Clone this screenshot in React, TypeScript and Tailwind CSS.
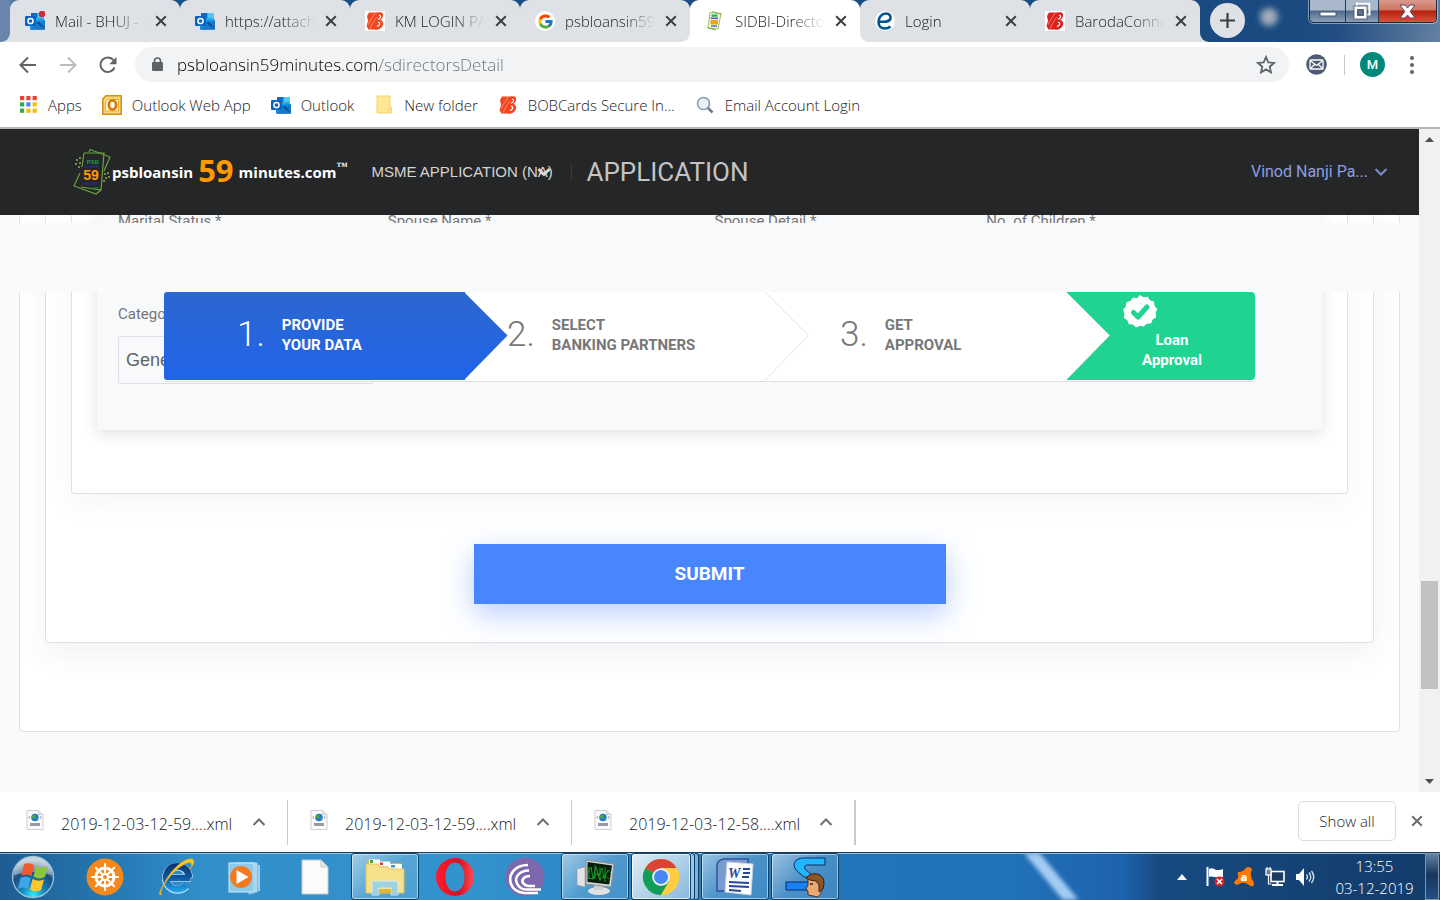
import type { ReactNode } from "react";
import { FcGoogle } from "react-icons/fc";

const UI = "font-['Open_Sans','Noto_Sans',sans-serif]";

/* ---------- icons ---------- */

function OutlookIcon({ badge = false }: { badge?: boolean }) {
  return (
    <svg width="20" height="20" viewBox="0 0 20 20" aria-hidden="true">
      <rect x="6" y="2" width="13" height="9" fill="#28a8ea" />
      <rect x="6" y="2" width="6.5" height="5" fill="#0f6cbd" />
      <rect x="12.500" y="2" width="6.500" height="5" fill="#50c8f5" />
      <path d="M5 9l15 0v8.500a1 1 0 0 1-1 1H6a1 1 0 0 1-1-1z" fill="#1490df" />
      <path d="M5 18.300L20 9.500v8.500a.8.8 0 0 1-.8.8H6z" fill="#1a76c6" />
      <path d="M20 18l-9-6 3-1.500z" fill="#0a4f96" />
      <rect x="0" y="5" width="11" height="10" rx="1" fill="#0a63c0" />
      <circle cx="5.500" cy="10" r="2.600" fill="none" stroke="#fff" strokeWidth="1.500" />
      {badge && <circle cx="17" cy="3" r="3.200" fill="#d8282f" />}
    </svg>
  );
}

function BarodaIcon({ color = "#f4451f" }: { color?: string }) {
  return (
    <svg width="20" height="20" viewBox="0 0 20 20" aria-hidden="true">
      <rect width="20" height="20" fill="#fff" />
      <path d="M4 1.500h10l-2 8 1 9H3.500L1.500 15l1.500-5-1-5z" fill={color} />
      <path d="M12 2c5-2 7.500 1 5.500 4.500-.5 1-1.500 2-2.500 2.500 4 .5 4 5 1.500 7.500-2 2-4.500 2.200-6.500 2z" fill={color} />
      <path d="M14 4.500c1.500-.4 2 .6 1.300 2-.6 1-1.300 1.500-2.300 1.800M13 11.500c1.700-.2 2.200 1 1.300 2.400-.6.9-1.500 1.300-2.300 1.400" fill="none" stroke="#fff" strokeWidth="1.200" />
      <path d="M10 2C8 6 5 9 3 14M12 6C9 10 7 13 5 17.500" stroke="#fff" strokeWidth=".4" fill="none" />
    </svg>
  );
}

function PsbTabIcon() {
  return (
    <svg width="20" height="20" viewBox="0 0 20 20" aria-hidden="true">
      <path d="M5 1.500l11 1-3 15.500-10-1z" fill="#f4fbe9" stroke="#8bb45b" strokeWidth=".9" />
      <path d="M7 .7l9.500 2.500M2.500 16.500l8 2.700" stroke="#6fae3a" strokeWidth="1" />
      <rect x="6.500" y="3.500" width="6" height="2.200" fill="#22b24c" />
      <rect x="5.500" y="6.500" width="7.500" height="1.600" fill="#4b62b5" />
      <rect x="5.500" y="9" width="7.500" height="4.500" fill="#f6a21e" />
      <rect x="6" y="14.300" width="6" height="1.400" fill="#4b62b5" />
    </svg>
  );
}

function EIcon() {
  return (
    <svg width="20" height="20" viewBox="0 0 20 20" aria-hidden="true">
      <circle cx="10" cy="10" r="10" fill="#fff" />
      <path d="M4.500 10.500c4 .5 10 .3 11-3 .6-2.500-1-5-4.500-5-4.500 0-7.500 4-7.500 8.500 0 4 2.500 6.500 6.200 6.500 2.300 0 4.300-.7 5.800-2" fill="none" stroke="#00548f" strokeWidth="2.600" />
    </svg>
  );
}

function CloseX({ size = 12, width = 2, color = "#3c4043" }: { size?: number; width?: number; color?: string }) {
  return (
    <svg width={size} height={size} viewBox="0 0 12 12" aria-hidden="true">
      <path d="M1.200 1.200l9.600 9.600M10.800 1.200L1.200 10.800" stroke={color} strokeWidth={width} />
    </svg>
  );
}

function Chevron({ up = false, color, width = 2 }: { up?: boolean; color: string; width?: number }) {
  return (
    <svg width="14" height="10" viewBox="0 0 14 10" aria-hidden="true">
      <path d={up ? "M1.500 8L7 2.500 12.500 8" : "M1.500 2L7 7.500 12.500 2"} fill="none" stroke={color} strokeWidth={width} />
    </svg>
  );
}

/* ---------- browser chrome ---------- */

type TabProps = { icon: ReactNode; title: string; active?: boolean; shape?: string; line?: boolean };

function Tab({ icon, title, active, shape = "", line }: TabProps) {
  return (
    <div className={`h-full w-[170px] shrink ${shape ? "bg-[linear-gradient(transparent_50%,#fff_50%)]" : ""}`}>
      <div
        className={`relative flex h-full items-center rounded-t-[9px] pl-[15px] pr-[11px] ${shape} ${active ? "bg-white" : "bg-[#dee1e6]"}`}
      >
        <span className="shrink-0">{icon}</span>
        <a
          href="#tab"
          className="ml-[10px] min-w-0 flex-1 overflow-hidden whitespace-nowrap text-[15px] font-light leading-5 text-[#202124] [mask-image:linear-gradient(to_right,#000_65%,transparent_100%)]"
        >
          {title}
        </a>
        <button aria-label={`Close ${title}`} className="ml-2 flex h-4 w-4 items-center justify-center">
          <CloseX />
        </button>
        {line && <span className="absolute -right-px bottom-2 top-[9px] w-px bg-[#85888d]" />}
      </div>
    </div>
  );
}

function WindowControls() {
  return (
    <div className="mr-[3px] flex h-[23px] w-[128px] shrink-0 self-start overflow-hidden rounded-b-[5px] border border-t-0 border-[#1a2a44] shadow-[0_0_0_1px_rgba(255,255,255,0.45)]">
      <button aria-label="Minimize" className="flex flex-[36] items-end justify-center border-r border-[#26374f] bg-[linear-gradient(#a9b8ca_45%,#4e6a8c_50%,#8ba0b8)] pb-[5px]">
        <svg width="18" height="6" viewBox="0 0 18 6" aria-hidden="true">
          <rect x="1" y="1" width="16" height="4" fill="#fff" stroke="#46546a" />
        </svg>
      </button>
      <button aria-label="Restore" className="flex flex-[33] items-center justify-center border-r border-[#26374f] bg-[linear-gradient(#a9b8ca_45%,#4e6a8c_50%,#8ba0b8)]">
        <svg width="18" height="18" viewBox="0 0 18 18" aria-hidden="true">
          <path d="M5 1h12v12h-3M5 1v4" fill="none" stroke="#46546a" strokeWidth="1" />
          <path d="M4 5V1.500h12.500v11H13" fill="none" stroke="#fff" strokeWidth="2" />
          <rect x="2.500" y="5.500" width="10" height="10" fill="#5b7492" stroke="#fff" strokeWidth="3" />
          <rect x="1" y="4" width="13" height="13" fill="none" stroke="#46546a" strokeWidth=".8" />
          <rect x="5" y="8" width="5" height="5" fill="none" stroke="#46546a" strokeWidth="1" />
        </svg>
      </button>
      <button aria-label="Close window" className="flex flex-[58] items-center justify-center bg-[linear-gradient(#d99a8c_0%,#cf7462_45%,#b5200f_50%,#d2553a)]">
        <svg width="17" height="15" viewBox="0 0 17 15" aria-hidden="true">
          <path d="M1 1h5l2.500 3L11 1h5l-4.800 6.500L16 14h-5l-2.500-3L6 14H1l4.800-6.500z" fill="#fff" stroke="#4c4c5c" strokeWidth="1" />
        </svg>
      </button>
    </div>
  );
}

function TabStrip() {
  return (
    <div className="flex h-[42px] shrink-0 bg-[linear-gradient(100deg,#6f88b0_0%,#1c4f88_3%,#1a4a80_90%,#234f82_93%,#6481a2_100%)]">
      <div className="w-[10px] shrink-0 bg-[#dee1e6]">
        <div className="h-full rounded-br-[9px] bg-[#6a85ad]" />
      </div>
      <div className="flex min-w-0">
        <Tab icon={<OutlookIcon badge />} title="Mail - BHUJ - Outlook" line />
        <Tab icon={<OutlookIcon />} title="https://attachment" line />
        <Tab icon={<BarodaIcon />} title="KM LOGIN PAGE" line />
        <Tab
          icon={
            <span className="flex h-5 w-5 items-center justify-center rounded-full bg-white">
              <FcGoogle size={17} />
            </span>
          }
          title="psbloansin59minutes"
          shape="rounded-br-[9px]"
        />
        <Tab icon={<PsbTabIcon />} title="SIDBI-Directors" active />
        <Tab icon={<EIcon />} title="Login" shape="rounded-bl-[9px]" line />
        <Tab icon={<BarodaIcon color="#e0201a" />} title="BarodaConnect" />
      </div>
      <div className="w-[10px] shrink-0 bg-[#dee1e6]">
        <div className="h-full rounded-bl-[9px] bg-[#1b4a80]" />
      </div>
      <button aria-label="New tab" className="mt-[3px] flex h-[35px] w-[35px] shrink-0 items-center justify-center rounded-full bg-[#dee1e6]">
        <svg width="15" height="15" viewBox="0 0 15 15" aria-hidden="true">
          <path d="M7.500 0v15M0 7.500h15" stroke="#3c4043" strokeWidth="2.200" />
        </svg>
      </button>
      <span className="ml-[15px] mt-2 h-[18px] w-[18px] rounded-full bg-[#a3adba] blur-[3px]" />
      <div className="flex-1" />
      <WindowControls />
    </div>
  );
}

function Toolbar() {
  return (
    <div className="flex h-[45px] shrink-0 items-center bg-white pl-[19px] pr-[26px]">
      <button aria-label="Back">
        <svg width="18" height="18" viewBox="0 0 18 18" aria-hidden="true">
          <path d="M17 9H2M9 1.500L1.500 9 9 16.500" fill="none" stroke="#5f6368" strokeWidth="2" />
        </svg>
      </button>
      <button aria-label="Forward" className="ml-[22px]">
        <svg width="18" height="18" viewBox="0 0 18 18" aria-hidden="true">
          <path d="M1 9h15M9 1.500L16.500 9 9 16.500" fill="none" stroke="#babcbe" strokeWidth="2" />
        </svg>
      </button>
      <button aria-label="Reload" className="ml-[22px]">
        <svg width="18" height="18" viewBox="0 0 18 18" aria-hidden="true">
          <path d="M15.500 11.500A7.300 7.300 0 1 1 14.500 4.200" fill="none" stroke="#5f6368" strokeWidth="2" />
          <path d="M17.500 1v7.200h-7.200z" fill="#5f6368" />
        </svg>
      </button>
      <div className="ml-[18px] flex h-[35px] flex-1 items-center rounded-full bg-[#f1f3f4] pl-[17px] pr-[13px]">
        <svg width="11" height="15" viewBox="0 0 11 15" aria-hidden="true">
          <rect x="0" y="5" width="11" height="9" rx="1" fill="#5f6368" />
          <path d="M2.500 6V4a3 3 0 0 1 6 0v2" fill="none" stroke="#5f6368" strokeWidth="1.600" />
        </svg>
        <input
          aria-label="Address"
          readOnly
          value="psbloansin59minutes.com/sdirectorsDetail"
          className="ml-[14px] h-7 min-w-0 flex-1 bg-[linear-gradient(to_right,#000_202px,#6b7075_202px)] bg-clip-text text-[17px] font-light text-transparent outline-none"
        />
        <button aria-label="Bookmark this page">
          <svg width="20" height="19" viewBox="0 0 20 19" aria-hidden="true">
            <path d="M10 2l2.300 5.400 5.800.5-4.400 3.800 1.300 5.700-5-3-5 3 1.300-5.700L1.900 7.900l5.800-.5z" fill="none" stroke="#5f6368" strokeWidth="1.800" />
          </svg>
        </button>
      </div>
      <button aria-label="Mail extension" className="ml-[17px]">
        <svg width="21" height="21" viewBox="0 0 21 21" aria-hidden="true">
          <circle cx="10.500" cy="10.500" r="10.300" fill="#4d5b75" />
          <rect x="4" y="6" width="13" height="9" rx="1" fill="none" stroke="#fff" strokeWidth="1.300" />
          <path d="M4 6.500l6.500 5 6.500-5M4 15l4.500-4.500M17 15l-4.500-4.500" fill="none" stroke="#fff" strokeWidth="1.200" />
        </svg>
      </button>
      <span className="ml-[17px] h-5 w-px bg-[#c6c8cb]" />
      <button aria-label="Profile" className="ml-[15px] flex h-[25px] w-[25px] items-center justify-center rounded-full bg-[#00897b] font-[Roboto,sans-serif] text-[13px] font-medium text-white">
        M
      </button>
      <button aria-label="Menu" className="ml-[25px] flex h-5 flex-col items-center justify-center gap-[3px]">
        <span className="h-1 w-1 rounded-full bg-[#5f6368]" />
        <span className="h-1 w-1 rounded-full bg-[#5f6368]" />
        <span className="h-1 w-1 rounded-full bg-[#5f6368]" />
      </button>
    </div>
  );
}

function Bookmark({ icon, children }: { icon: ReactNode; children: ReactNode }) {
  return (
    <a href="#bookmark" className="flex items-center gap-[10px] whitespace-nowrap text-[15px] font-light leading-5 text-[#202124]">
      <span className="flex h-5 w-5 items-center justify-center">{icon}</span>
      {children}
    </a>
  );
}

const appDots = ["#ea4335", "#ea4335", "#ea4335", "#34a853", "#4285f4", "#fbbc04", "#34a853", "#fbbc04", "#fbbc04"];

function BookmarksBar() {
  return (
    <nav className="flex h-[42px] shrink-0 items-center gap-5 border-b-2 border-[#b4b5b7] bg-white pb-[5px] pl-[18px]">
      <Bookmark
        icon={
          <svg width="17" height="17" viewBox="0 0 17 17" aria-hidden="true">
            {appDots.map((c, i) => (
              <rect key={i} x={(i % 3) * 6.3} y={Math.floor(i / 3) * 6.3} width="4.200" height="4.200" fill={c} />
            ))}
          </svg>
        }
      >
        Apps
      </Bookmark>
      <Bookmark
        icon={
          <svg width="20" height="20" viewBox="0 0 20 20" aria-hidden="true">
            <path d="M4 .8h15.200v18.400H.8V4z" fill="#f7d679" stroke="#d98d12" strokeWidth="1.500" />
            <path d="M5.500 4.500h11v11.500H3.500V6.500z" fill="#fff2cc" stroke="#edb23a" />
            <ellipse cx="10.500" cy="10" rx="3.600" ry="4.600" fill="#fff" stroke="#d97b06" strokeWidth="2.800" />
          </svg>
        }
      >
        Outlook Web App
      </Bookmark>
      <Bookmark icon={<OutlookIcon />}>Outlook</Bookmark>
      <Bookmark
        icon={
          <svg width="16" height="19" viewBox="0 0 16 19" aria-hidden="true">
            <path d="M1 1h13v11l1.500 1v5H1z" fill="#ffe795" stroke="#f4d467" />
            <path d="M12 18v-4l3.500-1" fill="none" stroke="#f4d467" />
          </svg>
        }
      >
        New folder
      </Bookmark>
      <Bookmark icon={<BarodaIcon />}>BOBCards Secure In...</Bookmark>
      <Bookmark
        icon={
          <svg width="18" height="18" viewBox="0 0 18 18" aria-hidden="true">
            <path d="M11.500 11.500l5 5" stroke="#6e7f90" strokeWidth="2.600" />
            <circle cx="7.500" cy="7.500" r="6" fill="#e6f3fc" stroke="#8b9bab" strokeWidth="1.600" />
          </svg>
        }
      >
        Email Account Login
      </Bookmark>
    </nav>
  );
}

/* ---------- web page ---------- */

function NotesLogo() {
  return (
    <svg width="38" height="46" viewBox="0 0 38 46" aria-hidden="true">
      <g fill="none" stroke="#6aa03d" strokeWidth="1.200">
        <path d="M11 4h20l-3 37-20-3M11 4L9 18" />
        <path d="M16 3l1-2.500L37 8 31 22" />
        <path d="M28 41l-5 4L1 37l6-13" />
      </g>
      <g fill="#8cb14e">
        <circle cx="4" cy="11" r="1" /><circle cx="7" cy="9" r="1" /><circle cx="3" cy="15" r="1" />
        <circle cx="7" cy="14" r="1" /><circle cx="6" cy="18" r="1" /><circle cx="32" cy="25" r="1" />
        <circle cx="35" cy="24" r="1" /><circle cx="33" cy="29" r="1" /><circle cx="36" cy="28" r="1" />
        <circle cx="31" cy="32" r="1" />
      </g>
      <g fontFamily="'Liberation Sans', sans-serif" fontWeight="700" textAnchor="middle">
        <text x="20" y="15" fontSize="6" fill="#12a04a">PSB</text>
        <text x="18" y="19" fontSize="4" fill="#2d2f88">LOANS</text>
        <text x="18" y="31" fontSize="14" fill="#ff9900">59</text>
        <text x="18" y="36" fontSize="3" fill="#2d2f88">MINUTES</text>
        <text x="22" y="40" fontSize="4" fill="#12803c">.com</text>
      </g>
    </svg>
  );
}

function SiteHeader() {
  return (
    <header className="relative z-10 flex h-[86px] shrink-0 items-center bg-[#252628] pl-[73px] pr-[31px]">
      <a href="#home" className={`flex items-center whitespace-nowrap font-bold text-white ${UI}`}>
        <NotesLogo />
        <span className="ml-px text-[15px]">psbloansin</span>
        <span className="mb-1 ml-[5px] text-[31px] font-bold leading-8 text-[#ff9900]">59</span>
        <span className="ml-[5px] text-[15px]">minutes.com</span>
        <span className="mb-3 font-['Liberation_Serif',serif] text-[11px] leading-3">™</span>
      </a>
      <div className="relative ml-6 flex items-center">
        <select
          aria-label="Application type"
          className="w-[184px] appearance-none bg-transparent font-['Liberation_Sans',sans-serif] text-[15px] leading-5 text-[#d4d4d4] outline-none"
        >
          <option>MSME APPLICATION (NA)</option>
        </select>
        <span className="pointer-events-none absolute right-1">
          <Chevron color="#d8d8d8" width={3} />
        </span>
      </div>
      <span className="ml-4 h-4 w-px bg-[#3a3b3e]" />
      <h1 className="ml-[14px] text-[26px] leading-8 text-[#c4c4c4]">APPLICATION</h1>
      <button className="ml-auto flex items-center gap-[6px] text-[16px] leading-5 text-[#8e9ee0]">
        Vinod Nanji Pa...
        <Chevron color="#7d8cc4" />
      </button>
    </header>
  );
}

function StepTip({ fill, stroke }: { fill: string; stroke: string }) {
  return (
    <svg className="absolute -right-[43px] top-0 z-10" width="44" height="88" viewBox="0 0 44 88" aria-hidden="true">
      <defs>
        <linearGradient id="tipBlue" x1="0" y1="0" x2="0" y2="1">
          <stop offset="0" stopColor="#2c66cf" />
          <stop offset="1" stopColor="#2064e9" />
        </linearGradient>
      </defs>
      <path d="M0 0L43.500 43.500 0 88z" fill={fill} />
      <path d="M0 0L43.500 43.500 0 88" fill="none" stroke={stroke} />
    </svg>
  );
}

function Step({ n, lines, pad, blue }: { n: string; lines: [string, string]; pad: string; blue?: boolean }) {
  return (
    <li
      className={`relative flex h-[88px] min-w-0 items-center gap-[17px] pb-[2px] ${pad} ${
        blue ? "rounded-l-[3px] bg-[linear-gradient(#2c66cf,#2064e9)] text-white" : "bg-white text-[#777777]"
      }`}
    >
      <span className="relative z-20 text-[35px] font-light leading-10">{n}</span>
      <span className="whitespace-nowrap text-[15px] font-bold leading-5">
        {lines[0]}
        <br />
        {lines[1]}
      </span>
      <StepTip fill={blue ? "url(#tipBlue)" : "#fff"} stroke={blue ? "none" : "#e2e2e2"} />
    </li>
  );
}

function Stepper() {
  return (
    <ol className="absolute left-[164px] right-[164px] top-[77px] grid grid-cols-[301fr_301fr_301fr_188fr] rounded-[3px] border-b border-[#dedfe3] bg-white pb-px">
      <Step n="1." lines={["PROVIDE", "YOUR DATA"]} pad="pl-[73px]" blue />
      <Step n="2." lines={["SELECT", "BANKING PARTNERS"]} pad="pl-[42px]" />
      <Step n="3." lines={["GET", "APPROVAL"]} pad="pl-[74px]" />
      <li className="flex h-[88px] min-w-0 flex-col items-center rounded-r-[4px] bg-[#21d391] pl-[22px] pt-[2px] text-center text-[15px] font-bold leading-5 text-white">
        <svg className="mr-[64px]" width="36" height="36" viewBox="0 0 36 36" aria-hidden="true">
          <path
            d="M18 1l3.500 2.300 4.200-.5 2.300 3.500 4 1.300.5 4.200 2.700 3.200-1.500 4 .5 4.200-3.500 2.300-1.700 3.900-4.200.3-3.200 2.700L18 31.800l-4 1.600-3-2.900-4.200-.3-1.500-4-3.600-2.400.8-4.100-1.500-4 2.700-3.200.7-4.200 4-1.200 2.400-3.500 4.200.6z"
            fill="#fff"
          />
          <path d="M11.500 18.500l4.500 4.500L25 13" fill="none" stroke="#21d391" strokeWidth="5" strokeLinecap="round" strokeLinejoin="round" />
        </svg>
        <span>
          Loan
          <br />
          Approval
        </span>
      </li>
    </ol>
  );
}

function PageBody() {
  return (
    <main className="relative min-h-0 flex-1 overflow-hidden bg-[#fafafa]">
      <form onSubmit={(e) => e.preventDefault()} className="mx-[19px] rounded-b-[4px] border border-t-0 border-[#e2e2e4] bg-white px-[25px] pb-[88px]">
        <div className="rounded-b-[4px] border border-t-0 border-[#e0e0e3] bg-white px-[25px] pb-[38px] shadow-[0_10px_30px_rgba(60,70,110,0.07)]">
          <div className="rounded-b-[4px] border border-t-0 border-[#e0e0e3] bg-white px-[25px] pb-[63px] shadow-[0_10px_30px_rgba(60,70,110,0.05)]">
            <div className="rounded-b-[4px] bg-[#f8f9fb] px-[21px] pb-[46px] shadow-[0_4px_16px_rgba(0,0,0,0.12)]">
              <div className="grid grid-cols-[270fr_327fr_272fr_315fr] text-[15px] leading-5 text-[#757575]">
                <span className="-mt-1">Marital Status *</span>
                <span className="-mt-1">Spouse Name *</span>
                <span className="-mt-1">Spouse Detail *</span>
                <span className="-mt-1">No. of Children *</span>
              </div>
              <label htmlFor="category" className="mt-[73px] block text-[15px] leading-5 text-[#757575]">
                Category *
              </label>
              <select
                id="category"
                className="mt-3 block h-12 w-64 appearance-none rounded-[3px] border border-[#dfe0e4] bg-[#f8f9fb] px-[7px] font-['Liberation_Sans',sans-serif] text-[18px] text-[#606468]"
              >
                <option>General</option>
              </select>
            </div>
          </div>
          <button
            type="submit"
            className="mx-auto mt-[50px] block h-[60px] w-[472px] bg-[#4886ff] text-[19px] font-bold leading-6 text-white shadow-[0_10px_30px_rgba(72,134,255,0.4)]"
          >
            SUBMIT
          </button>
        </div>
      </form>
      <div className="absolute inset-x-0 top-2 h-[69px] bg-[#fafafa]" />
      <Stepper />
    </main>
  );
}

function Scrollbar() {
  return (
    <div className="flex w-[21px] shrink-0 flex-col items-center bg-[#f1f1f1]">
      <button aria-label="Scroll up" className="flex h-[21px] w-full shrink-0 items-center justify-center">
        <svg width="9" height="5" viewBox="0 0 9 5" aria-hidden="true"><path d="M4.500 0L9 5H0z" fill="#505050" /></svg>
      </button>
      <div className="flex-[431]" />
      <div className="h-[108px] w-[17px] shrink-0 bg-[#c1c1c1]" />
      <div className="flex-[82]" />
      <button aria-label="Scroll down" className="flex h-[21px] w-full shrink-0 items-center justify-center">
        <svg width="9" height="5" viewBox="0 0 9 5" aria-hidden="true"><path d="M4.500 5L9 0H0z" fill="#505050" /></svg>
      </button>
    </div>
  );
}

/* ---------- downloads ---------- */

function Download({ name, last }: { name: string; last?: boolean }) {
  return (
    <div className={`flex h-[45px] w-[284px] items-center pl-[22px] pr-[21px] ${last ? "border-r-2" : "border-r"} border-[#c9cbce]`}>
      <svg className="mb-1 shrink-0" width="18" height="20" viewBox="0 0 18 20" aria-hidden="true">
        <path d="M1 .5h11.500L17 4.500v15H1z" fill="#fafafa" stroke="#cfcfd2" />
        <path d="M12.500.5v4H17" fill="#e6e6e8" stroke="#cfcfd2" />
        <circle cx="9" cy="7.500" r="3.800" fill="#2476c8" />
        <path d="M7 5c2-1 3 .5 2.500 2S7.500 9 6.500 8 6 6 7 5M11 7l1.500.5-1 2.500-1-1z" fill="#3fae49" />
        <path d="M4 6L2.500 7.500 4 9M14 6l1.500 1.500L14 9" fill="none" stroke="#888" strokeWidth=".8" />
        <rect x="4" y="13" width="10" height="3" fill="#9d97ab" />
      </svg>
      <a href="#download" className="ml-[17px] mt-1 flex-1 whitespace-nowrap text-[16px] font-light leading-5 text-[#202124]">{name}</a>
      <button aria-label={`Options for ${name}`} className="flex">
        <Chevron up color="#6b6e72" />
      </button>
    </div>
  );
}

function DownloadsBar() {
  return (
    <div className="flex h-[60px] shrink-0 items-center bg-white pb-[2px] pl-1">
      <div className="flex pt-[2px]">
        <Download name="2019-12-03-12-59....xml" />
        <Download name="2019-12-03-12-59....xml" />
        <Download name="2019-12-03-12-58....xml" last />
      </div>
      <button className="ml-auto h-10 w-[98px] rounded-[5px] border border-[#dadce0] text-[15px] font-light leading-5 text-[#202124]">Show all</button>
      <button aria-label="Close downloads" className="ml-[15px] mr-[17px]">
        <CloseX color="#6b6e72" />
      </button>
    </div>
  );
}

/* ---------- taskbar ---------- */

function Slot({ label, look = "", children }: { label: string; look?: string; children: ReactNode }) {
  return (
    <button aria-label={label} className={`flex h-[47px] w-[68px] shrink-0 items-center justify-center ${look}`}>
      {children}
    </button>
  );
}

const open =
  "rounded-[3px] border border-[#123f66] bg-[linear-gradient(135deg,rgba(255,255,255,0.55),rgba(255,255,255,0.18)_50%,rgba(255,255,255,0.12))] shadow-[inset_0_0_0_1px_rgba(255,255,255,0.5)]";
const activeApp =
  "rounded-[3px] border border-[#123f66] bg-[linear-gradient(135deg,rgba(255,255,255,0.85),rgba(255,255,255,0.45))] shadow-[inset_0_0_0_1px_rgba(255,255,255,0.7)]";

function Orb() {
  return (
    <svg width="44" height="44" viewBox="0 0 44 44" aria-hidden="true">
      <defs>
        <radialGradient id="orb" cx=".5" cy=".95" r=".85">
          <stop offset="0" stopColor="#2ff0ff" /><stop offset=".35" stopColor="#1682b8" />
          <stop offset=".7" stopColor="#1b4d7c" /><stop offset="1" stopColor="#a9bccb" />
        </radialGradient>
      </defs>
      <circle cx="22" cy="22" r="20.500" fill="url(#orb)" stroke="#9cc3da" strokeWidth="1.300" />
      <path d="M3 20a19 18 0 0 1 38 0q-18-6-38 0z" fill="#fff" opacity=".35" />
      <path d="M13 9q6-2 10 1l-2.500 11q-5-3-10 0z" fill="#f0592a" />
      <path d="M25 11q6 3 12 0l-3 11q-6 3-11.500-.5z" fill="#8cc63e" />
      <path d="M9.500 23q5-3 10 0L17 34q-5-3-10 0z" fill="#3fa4e8" />
      <path d="M21.500 24q6 3 11.500 0.500l-3 10.500q-5 3-11-.5z" fill="#fdc92c" />
    </svg>
  );
}

function Wheel() {
  return (
    <svg width="38" height="38" viewBox="0 0 38 38" aria-hidden="true">
      <circle cx="19" cy="19" r="18.500" fill="#f7881c" />
      <g stroke="#fff" fill="none">
        <circle cx="19" cy="19" r="9" strokeWidth="3" />
        <path d="M19 6v26M6 19h26M9.800 9.800l18.400 18.400M28.200 9.800L9.800 28.200" strokeWidth="2" strokeLinecap="round" />
      </g>
      <circle cx="19" cy="19" r="4" fill="#fff" /><circle cx="19" cy="19" r="2" fill="#f7881c" />
    </svg>
  );
}

function InternetExplorer() {
  return (
    <svg width="40" height="40" viewBox="0 0 40 40" aria-hidden="true">
      <defs>
        <linearGradient id="ie" gradientUnits="userSpaceOnUse" x1="0" y1="5" x2="0" y2="35">
          <stop offset="0" stopColor="#0a2f66" /><stop offset=".5" stopColor="#0c559f" /><stop offset="1" stopColor="#21a5ee" />
        </linearGradient>
      </defs>
      <g fill="none">
        <path d="M12 21h24M34 21a11.500 11.500 0 1 0-3 8" stroke="#b8e2fa" strokeWidth="8" />
        <path d="M12 21h23.500M34 20.500a11.500 11.500 0 1 0-3 8" stroke="url(#ie)" strokeWidth="6.500" />
      </g>
      <path d="M9 27C4 35 3 39 7 37.500 4 37 7 30 13 22 22 10 33 4 36 6q2 2-1 6c5-6 5-10 1-10C30 1 16 12 9 27z" fill="#fbc926" stroke="#e6ab1a" strokeWidth=".8" />
    </svg>
  );
}

function MediaPlayer() {
  return (
    <svg width="36" height="38" viewBox="0 0 36 38" aria-hidden="true">
      <path d="M6 4h22l3 1v29l-9 3z" fill="#78bfe4" />
      <path d="M29 5v29M32 7v26" stroke="#bfe3f5" strokeWidth="1.500" />
      <rect x="2" y="5" width="25" height="29" fill="#8ecbe9" stroke="#cbe9f7" />
      <circle cx="14" cy="19" r="11" fill="#f37a1f" />
      <path d="M9.500 12v14L21.500 19z" fill="#fff" />
    </svg>
  );
}

function Explorer() {
  return (
    <svg width="42" height="40" viewBox="0 0 42 40" aria-hidden="true">
      <path d="M3 3h12l2 3h20v28H3z" fill="#d8b650" />
      <rect x="5" y="2.500" width="11" height="5" fill="#fff" /><rect x="6" y="3" width="3" height="3" fill="#3ba84f" />
      <rect x="14" y="4.500" width="12" height="5" fill="#fff" /><rect x="16" y="5.500" width="3" height="2.500" fill="#d8412b" />
      <rect x="24" y="7" width="14" height="5" fill="#fff" /><rect x="27" y="8" width="4" height="2.500" fill="#3498d8" />
      <path d="M2 7h12l2 3h8l2 2h14v24H2z" fill="#f7e08c" stroke="#e2c35c" />
      <path d="M8 38V26q0-2 2-2h22q2 0 2 2v12h-7v-7H15v7z" fill="#8fd0ee" opacity=".85" stroke="#d4effb" />
      <rect x="15" y="32" width="12" height="4" fill="#e5b62b" />
    </svg>
  );
}

function Opera() {
  return (
    <svg width="40" height="40" viewBox="0 0 40 40" aria-hidden="true">
      <defs><linearGradient id="op" x1="0" x2="1"><stop offset="0" stopColor="#ff1b2d" /><stop offset=".6" stopColor="#d9101f" /><stop offset="1" stopColor="#ff4b55" /></linearGradient></defs>
      <path fillRule="evenodd" d="M20 1a19 19 0 1 1 0 38 19 19 0 0 1 0-38zm0 4.500c-5.500 0-9.500 6-9.500 14.500s4 14.500 9.500 14.500S29.500 28.500 29.500 20 25.500 5.500 20 5.500z" fill="url(#op)" />
    </svg>
  );
}

function Torrent() {
  return (
    <svg width="40" height="40" viewBox="0 0 40 40" aria-hidden="true">
      <circle cx="20" cy="20" r="19.500" fill="#7d68ae" />
      <g fill="none" stroke="#fff" strokeWidth="2.600">
        <path d="M23 8C9 8 3 18 6 27q3 8 13 9h14" />
        <path d="M24 13.500c-10 0-15 7-12 13q3 6 9 6h15" />
        <path d="M25 19c-6 0-9 4-7 7q2 3 6 3h6" />
      </g>
    </svg>
  );
}

function Monitor() {
  return (
    <svg width="40" height="38" viewBox="0 0 40 38" aria-hidden="true">
      <path d="M2 11l8-2v20l-8-2z" fill="#e4e4e4" stroke="#999" strokeWidth=".6" />
      <ellipse cx="24" cy="33" rx="11" ry="4" fill="#e1e3e4" /><rect x="19" y="26" width="9" height="6" fill="#cfd2d4" />
      <path d="M11 2l28 4-3 23-25-3z" fill="#d5d8d9" stroke="#8c8f90" />
      <path d="M12.500 4l24.500 3.500-2.800 19-21.700-2.500z" fill="#071d0b" />
      <path d="M13 15l3-6 2 12 3-12 3 9 3-8 2 11 4-9 3 3M14 9v12M20 7v14M25 9v14M30 9v15M13 20l5 1 4-6 3 7 4-5 5 4" fill="none" stroke="#1da02b" strokeWidth=".9" />
    </svg>
  );
}

function ChromeIcon() {
  return (
    <svg width="38" height="38" viewBox="0 0 38 38" aria-hidden="true">
      <circle cx="19" cy="19" r="18" fill="#fcc934" />
      <path d="M3.400 10A18 18 0 0 1 34.600 10H19l0 9z" fill="#da4437" />
      <path d="M3.400 10A18 18 0 0 0 19 37l8-13.500L19 19z" fill="#109d58" />
      <path d="M27 23.500L19 37A18 18 0 0 0 34.600 10H19z" fill="#ffcd40" />
      <circle cx="19" cy="19" r="8.800" fill="#f1f1f1" /><circle cx="19" cy="19" r="7" fill="#4687f4" />
    </svg>
  );
}

function Word() {
  return (
    <svg width="40" height="40" viewBox="0 0 40 40" aria-hidden="true">
      <path d="M9 2h24v32H2V9q0-6 7-7z" fill="#7a9bd0" stroke="#2d549b" strokeWidth="1.500" />
      <path d="M12 5l26 2-2 31-26-3z" fill="#fdfdff" stroke="#c8d2e6" />
      <text x="13" y="21" fontFamily="'Liberation Serif', serif" fontStyle="italic" fontWeight="700" fontSize="14" fill="#254a93">W</text>
      <path d="M28 12h7M28 16h7M27 20h7M14 25l20 1M14 29l20 1M14 33l12 1" stroke="#254a93" strokeWidth="2" />
    </svg>
  );
}

function SupportAgent() {
  return (
    <svg width="42" height="42" viewBox="0 0 42 42" aria-hidden="true">
      <path d="M41 2H20C10 2 8 9 12 14l8 7h10l-9-8q-2-3 2-4h18z" fill="#22b6ff" stroke="#0b2b6b" />
      <path d="M2 26h24v8H2z" fill="#1583f0" stroke="#0b2b6b" />
      <path d="M24 22q6-6 13-2 4 3 2 11-2 8-5 10l-10-2v-4l-2-2 2-4z" fill="#e8a878" stroke="#3c1d0b" strokeWidth=".8" />
      <path d="M22 22q6-7 14-3 6 4 3 14l-4 3v-7l-3-4q-6 0-10-3z" fill="#8a5527" stroke="#2b1405" strokeWidth=".8" />
      <path d="M26 28h3" stroke="#3c1d0b" strokeWidth="1.400" />
    </svg>
  );
}

function Tray() {
  return (
    <div className="ml-auto flex h-full shrink-0 items-center text-white">
      <button aria-label="Show hidden icons">
        <svg width="10" height="6" viewBox="0 0 10 6" aria-hidden="true"><path d="M5 0l5 6H0z" fill="#f4f7fa" /></svg>
      </button>
      <svg className="ml-[19px]" width="19" height="20" viewBox="0 0 19 20" aria-hidden="true">
        <path d="M1.500 0v19" stroke="#fff" strokeWidth="2" />
        <path d="M3 2c4-2 5 1 8 1 2 0 4 0 6-1v8c-4 2-6 0-8 0s-4-1-6 0z" fill="#fff" />
        <circle cx="13.500" cy="14.500" r="5" fill="#d9241d" /><path d="M11 12l5 5M16 12l-5 5" stroke="#fff" strokeWidth="1.600" />
      </svg>
      <svg className="ml-[9px]" width="20" height="20" viewBox="0 0 20 20" aria-hidden="true">
        <path d="M5 5q4 0 7-4 2-2 5 0 2 2 0 4-1 5 2 9 2 3 0 5-2 1-4-1-4-3-8-2-4 3-6 1-2-2 1-4 3-2 2-5-1-3 1-3z" fill="#ff7a00" />
        <text x="10" y="14" textAnchor="middle" fontFamily="'Open Sans', sans-serif" fontWeight="800" fontSize="11" fill="#fff">a</text>
      </svg>
      <svg className="ml-[11px]" width="20" height="20" viewBox="0 0 20 20" aria-hidden="true">
        <rect x="6" y="4.500" width="13" height="10" fill="#1d3c5f" stroke="#fff" strokeWidth="1.600" />
        <path d="M12.500 14v3M7 18h11" stroke="#fff" strokeWidth="2" />
        <rect x="1" y="2" width="5" height="6" fill="#6b7d90" stroke="#fff" strokeWidth="1.200" />
        <path d="M3.500 8v9h3M2 0v2M5 0v2" fill="none" stroke="#fff" strokeWidth="1.200" />
      </svg>
      <svg className="ml-[10px]" width="20" height="20" viewBox="0 0 20 20" aria-hidden="true">
        <path d="M1 7h3l5-6v18l-5-6H1z" fill="#fff" />
        <path d="M11.500 7.500q2 2.500 0 5M14 5.500q3.500 4.500 0 9M16.500 4q4.500 6 0 12" fill="none" stroke="#dbe6f0" strokeWidth="1.300" />
      </svg>
      <time className="ml-[9px] w-[101px] text-center text-[15px] font-light leading-[22px]">
        13:55
        <br />
        03-12-2019
      </time>
      <button aria-label="Show desktop" className="mr-px h-[47px] w-[14px] border border-[#7d97b4] bg-[linear-gradient(#6484a6,#17365d_45%,#234f83)]" />
    </div>
  );
}

function Taskbar() {
  return (
    <footer className="relative flex h-12 shrink-0 items-start overflow-hidden border-t border-[#1e3f5c] bg-[linear-gradient(to_right,#1e5c91_0%,#2372ac_6%,#318fca_14%,#3393cd_33%,#2a84c4_42%,#2275b9_58%,#2172b9_70%,#1d62ae_78%,#174a80_80.500%,#123b69_100%)] shadow-[inset_0_1px_0_rgba(190,225,245,0.7)]">
      <svg className="absolute inset-y-0 left-[70%] h-full w-[90px] blur-[2px]" viewBox="0 0 90 48" aria-hidden="true">
        <path d="M12 -4h16l48 58H60z" fill="#a5ccf2" />
      </svg>
      <button aria-label="Start" className="ml-[11px] mr-4 mt-[2px] shrink-0"><Orb /></button>
      <div className="flex gap-[2px]">
        <Slot label="Wheel"><Wheel /></Slot>
        <Slot label="Internet Explorer"><InternetExplorer /></Slot>
        <Slot label="Media Player"><MediaPlayer /></Slot>
        <Slot label="Document">
          <svg width="28" height="36" viewBox="0 0 28 36" aria-hidden="true">
            <path d="M1 1h19l7 7v27H1z" fill="#fbfbfb" stroke="#c5c9cc" /><path d="M20 1v7h7" fill="#e4e6e8" stroke="#c5c9cc" />
          </svg>
        </Slot>
        <Slot label="Explorer" look={open}><Explorer /></Slot>
        <Slot label="Opera"><Opera /></Slot>
        <Slot label="Torrent"><Torrent /></Slot>
        <Slot label="Terminal" look={open}><Monitor /></Slot>
        <div className="flex w-[68px] shrink-0">
          <button aria-label="Chrome" className={`flex h-[47px] w-[60px] items-center justify-center ${activeApp}`}>
            <ChromeIcon />
          </button>
          <span className="h-[47px] w-1 rounded-r-[3px] border border-l-0 border-[#123f66] bg-[#9cc4e4]" />
          <span className="h-[47px] w-1 rounded-r-[3px] border border-l-0 border-[#123f66] bg-[#7fb2da]" />
        </div>
        <Slot label="Word" look={open}><Word /></Slot>
        <Slot label="Support" look={open}><SupportAgent /></Slot>
      </div>
      <Tray />
    </footer>
  );
}

export default function App() {
  return (
    <div className={`flex h-screen flex-col overflow-hidden bg-white ${UI}`}>
      <TabStrip />
      <Toolbar />
      <BookmarksBar />
      <div className="flex min-h-0 flex-1">
        <div className="flex min-w-0 flex-1 flex-col font-[Roboto,sans-serif]">
          <SiteHeader />
          <PageBody />
        </div>
        <Scrollbar />
      </div>
      <DownloadsBar />
      <Taskbar />
    </div>
  );
}
